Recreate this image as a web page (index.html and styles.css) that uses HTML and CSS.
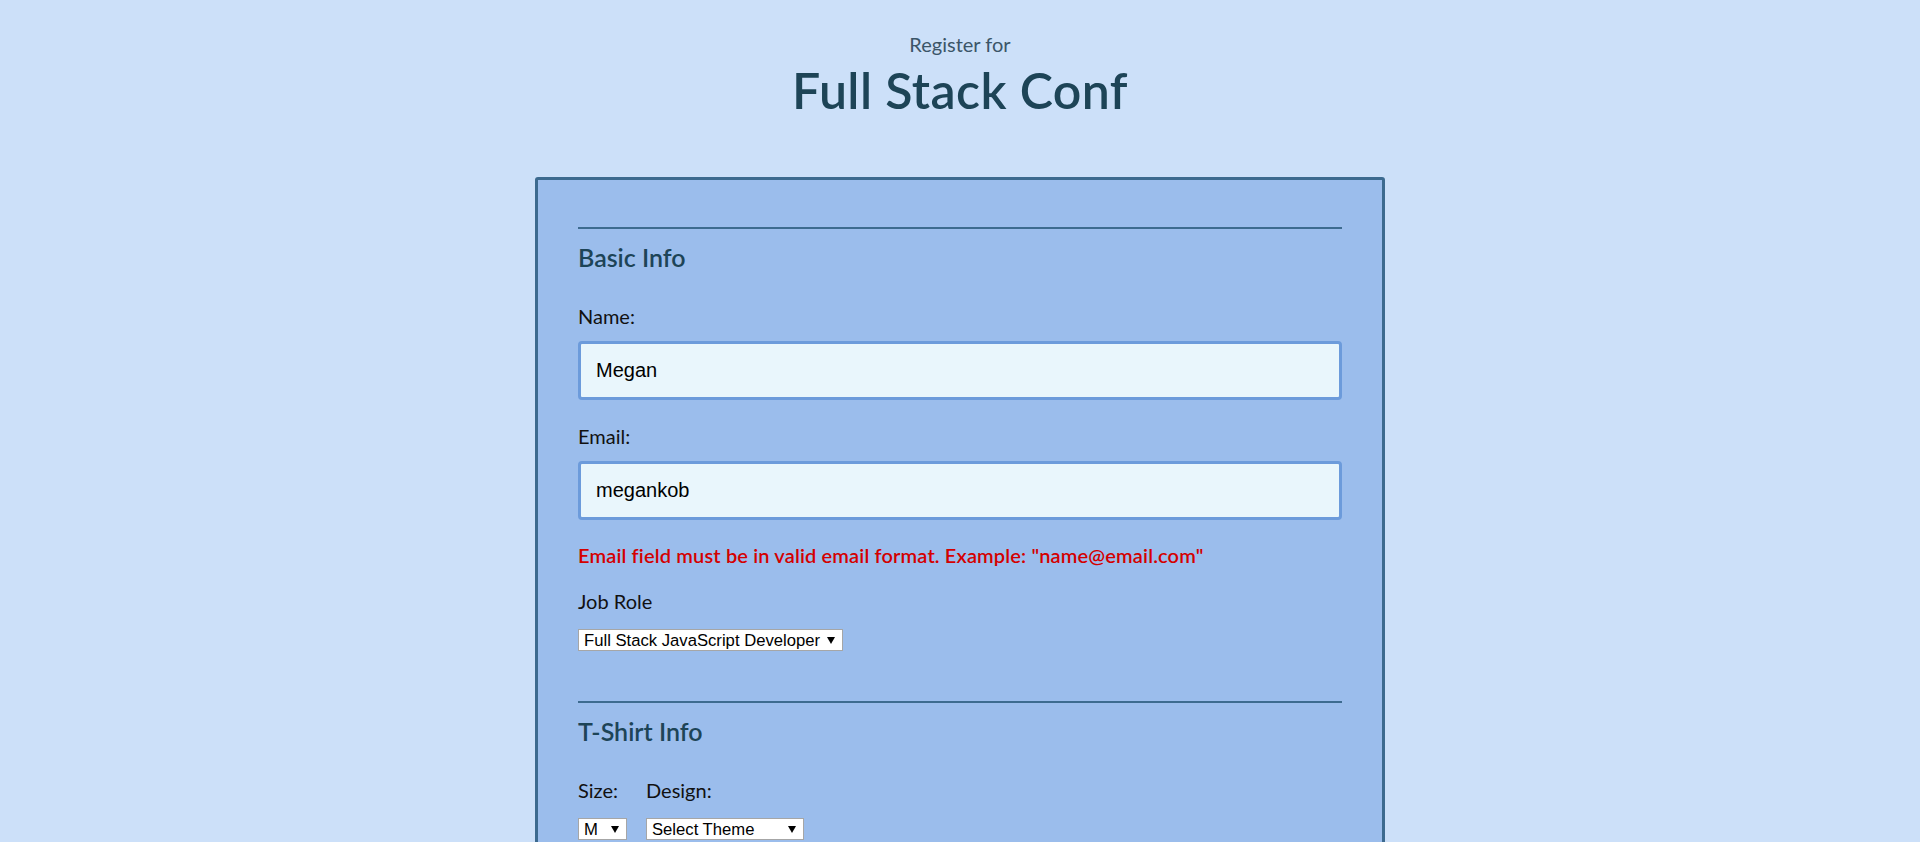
FILE: index.html
```html
<!DOCTYPE html>
<html lang="en">
<head>
<meta charset="utf-8">
<title>Register for Full Stack Conf</title>
<link rel="stylesheet" href="styles.css">
</head>
<body>
<header class="page-header">
  <p class="kicker">Register for</p>
  <h1 class="title">Full Stack Conf</h1>
</header>
<form class="reg-form">
  <section class="group">
    <h2 class="group-title">Basic Info</h2>
    <label class="field-label" for="name">Name:</label>
    <input class="text-input" id="name" type="text" value="Megan">
    <label class="field-label" for="mail">Email:</label>
    <input class="text-input" id="mail" type="text" value="megankob">
    <p class="error">Email field must be in valid email format. Example: "name@email.com"</p>
    <label class="field-label label-job" for="title">Job Role</label>
    <span class="select select-job">
      <select id="title">
        <option>Full Stack JavaScript Developer</option>
      </select>
    </span>
  </section>
  <section class="group group-shirt">
    <h2 class="group-title">T-Shirt Info</h2>
    <div class="shirt-row">
      <div class="shirt-col">
        <label class="field-label shirt-label" for="size">Size:</label>
        <span class="select select-size">
          <select id="size"><option>M</option></select>
        </span>
      </div>
      <div class="shirt-col">
        <label class="field-label shirt-label" for="design">Design:</label>
        <span class="select select-design">
          <select id="design"><option>Select Theme</option></select>
        </span>
      </div>
    </div>
  </section>
</form>
</body>
</html>
```
FILE: styles.css
```css
html, body {
  margin: 0;
  padding: 0;
}
body {
  background: #cce0f9;
  font-family: Lato, "Open Sans", "DejaVu Sans", sans-serif;
  color: #111;
}
.page-header {
  text-align: center;
  padding-top: 32px;
}
.kicker {
  margin: 0;
  font-size: 20px;
  line-height: 24px;
  color: #3b5568;
}
.title {
  margin: 4px 0 0;
  font-size: 50px;
  line-height: 60px;
  font-weight: 600;
  letter-spacing: 0.4px;
  color: #1d4457;
}
.reg-form {
  width: 850px;
  box-sizing: border-box;
  margin: 57px auto 0;
  background: #9bbdec;
  border: 3px solid #3c6a8f;
  border-radius: 3px;
  padding: 47px 40px 60px;
}
.group {
  border-top: 2px solid #3d6b8f;
}
.group-shirt {
  margin-top: 50px;
}
.group-title {
  margin: 13px 0 0;
  font-size: 25px;
  line-height: 30px;
  font-weight: 600;
  color: #1d4457;
}
.field-label {
  display: block;
  margin-top: 32px;
  font-size: 20px;
  line-height: 24px;
  color: #111;
}
.text-input {
  display: block;
  width: 100%;
  height: 59px;
  box-sizing: border-box;
  margin: 13px 0 0;
  border: 3px solid #6c9bdb;
  border-radius: 4px;
  background: #e9f6fc;
  padding: 0 15px;
  font-family: "Liberation Sans", Arial, sans-serif;
  font-size: 20px;
  color: #000;
  outline: none;
}
.text-input + .field-label {
  margin-top: 24px;
}
.error {
  margin: 23px 0 0;
  font-size: 20px;
  line-height: 24px;
  font-weight: 600;
  letter-spacing: 0.15px;
  color: #d40000;
}
.label-job {
  margin-top: 22px;
  margin-bottom: 16px;
}
.select {
  position: relative;
  display: inline-block;
  vertical-align: top;
}
.select::after {
  content: "";
  position: absolute;
  right: 8px;
  top: 8px;
  width: 0;
  height: 0;
  border-left: 4px solid transparent;
  border-right: 4px solid transparent;
  border-top: 7px solid #000;
  pointer-events: none;
}
.select select {
  -webkit-appearance: none;
  appearance: none;
  display: block;
  height: 22px;
  box-sizing: border-box;
  margin: 0;
  border: 1px solid #a6a6a6;
  border-radius: 0;
  background: #fff;
  padding: 0 0 0 5px;
  font-family: "Liberation Sans", Arial, sans-serif;
  font-size: 16.67px;
  color: #000;
}
.select-job select {
  width: 265px;
}
.select-size select {
  width: 49px;
}
.select-design select {
  width: 158px;
}
.shirt-row {
  display: flex;
  gap: 19px;
  margin-top: 32px;
}
.shirt-col {
  display: flex;
  flex-direction: column;
  align-items: flex-start;
}
.shirt-label {
  margin: 0 0 16px;
}
```
